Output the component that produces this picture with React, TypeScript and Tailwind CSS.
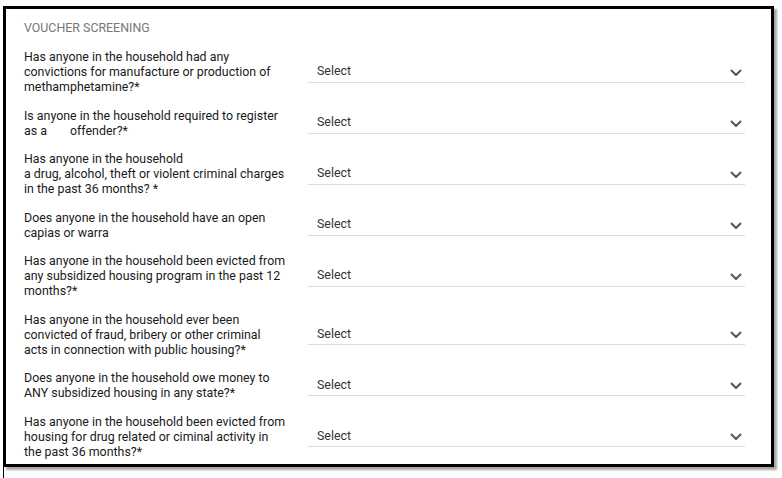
const questions: { lines: React.ReactNode[] }[] = [
  {
    lines: [
      'Has anyone in the household had any',
      'convictions for manufacture or production of',
      'methamphetamine?*',
    ],
  },
  {
    lines: [
      'Is anyone in the household required to register',
      <>
        as a<span className="inline-block w-[23px]" />offender?*
      </>,
    ],
  },
  {
    lines: [
      'Has anyone in the household',
      'a drug, alcohol, theft or violent criminal charges',
      'in the past 36 months? *',
    ],
  },
  {
    lines: ['Does anyone in the household have an open', 'capias or warra'],
  },
  {
    lines: [
      'Has anyone in the household been evicted from',
      'any subsidized housing program in the past 12',
      'months?*',
    ],
  },
  {
    lines: [
      'Has anyone in the household ever been',
      'convicted of fraud, bribery or other criminal',
      'acts in connection with public housing?*',
    ],
  },
  {
    lines: ['Does anyone in the household owe money to', 'ANY subsidized housing in any state?*'],
  },
  {
    lines: [
      'Has anyone in the household been evicted from',
      'housing for drug related or ciminal activity in',
      'the past 36 months?*',
    ],
  },
];

function SelectField() {
  return (
    <div className="flex h-[22px] w-[437px] items-center justify-between border-b border-[#dcdcdc] pb-[1px] pl-[9px] pr-[3px]">
      <span className="text-[12.4px] leading-[15px] text-[#333]">Select</span>
      <svg width="12" height="8" viewBox="0 0 12 8" className="mt-[4px]" fill="none">
        <polyline
          points="1.5,1.5 6,6 10.5,1.5"
          stroke="#555"
          strokeWidth="2"
          strokeLinecap="round"
          strokeLinejoin="round"
        />
      </svg>
    </div>
  );
}

export default function App() {
  return (
    <div className="relative h-[478px] w-[782px] bg-white font-['Roboto',sans-serif]">
      <div className="absolute left-[3px] top-[458px] h-[20px] w-[1px] bg-black" />
      <div className="ml-[3px] pt-[6px]">
        <div className="h-[461px] w-[771px] border-[3px] border-black bg-white pl-[18px] pt-[11px] shadow-[3px_3px_2px_rgba(0,0,0,0.35)]">
          <h2 className="text-[12.4px] font-normal uppercase leading-[15px] text-[#777]">
            Voucher Screening
          </h2>
          <div className="mt-[14px] flex flex-col gap-[13.5px]">
            {questions.map((q, i) => (
              <div key={i} className="flex items-center">
                <div className="w-[284px] text-[12.4px] leading-[15px] text-[#1a1a1a]">
                  {q.lines.map((line, j) => (
                    <div key={j} className="whitespace-nowrap">
                      {line}
                    </div>
                  ))}
                </div>
                <SelectField />
              </div>
            ))}
          </div>
        </div>
      </div>
    </div>
  );
}
